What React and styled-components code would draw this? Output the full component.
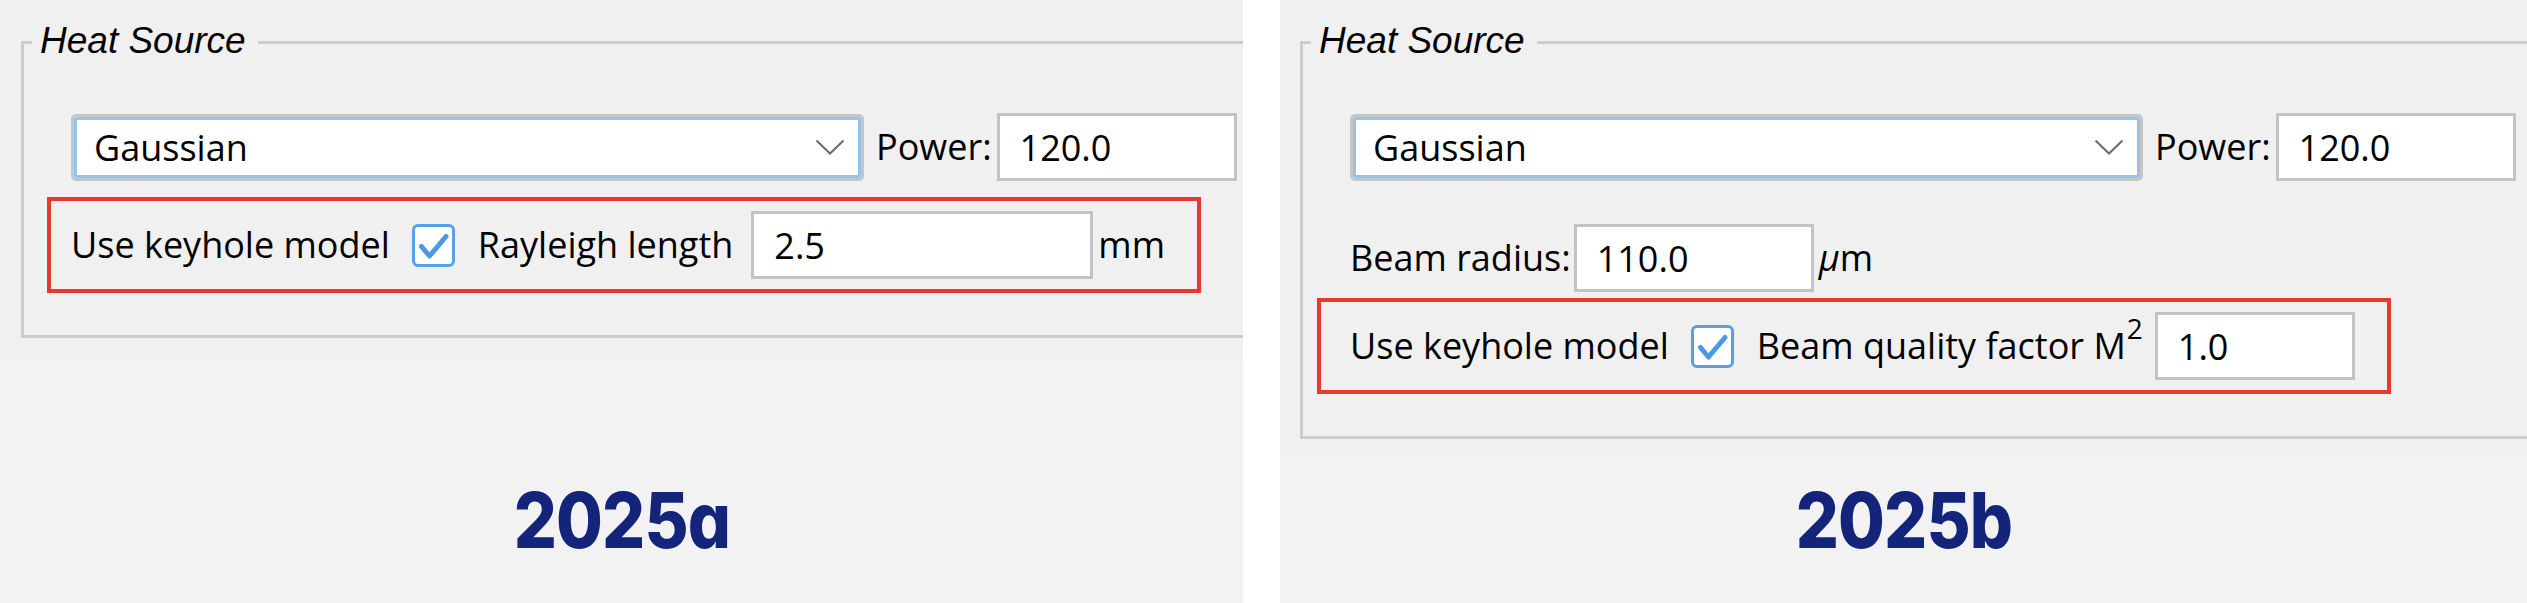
import React from "react";
import styled, { createGlobalStyle } from "styled-components";

const UI_FONT = `"Open Sans", "Noto Sans", "Liberation Sans", sans-serif`;
const DIALOG_BG = "#f0f0f0";

const GlobalStyle = createGlobalStyle`
  html, body {
    margin: 0;
    padding: 0;
    background: #ffffff;
  }
  body {
    width: 2527px;
    height: 603px;
    overflow: hidden;
  }
  * {
    box-sizing: border-box;
  }
`;

const Page = styled.main`
  display: flex;
  gap: 37px;
  width: 2527px;
  height: 603px;
`;

const Panel = styled.section`
  flex: 0 0 ${(p) => p.$width}px;
  display: flex;
  flex-direction: column;
  overflow: hidden;
  background: #f2f2f2;
`;

const Dialog = styled.div`
  flex: none;
  height: ${(p) => p.$height}px;
  padding: 41px 0 0 ${(p) => p.$inset}px;
  background: ${DIALOG_BG};
`;

/* Group box: a framed block whose caption sits over the top rule */
const Group = styled.div`
  position: relative;
  width: 1400px;
  padding: 69px 0 42px 47px;
  border: 3px solid #cdcdcd;
`;

const GroupTitle = styled.span`
  position: absolute;
  top: -22px;
  left: 8px;
  padding: 0 12px 0 8px;
  background: ${DIALOG_BG};
  font: italic 37px/37px "Liberation Sans", Arial, sans-serif;
  color: #000;
  white-space: nowrap;
`;

const Stack = styled.div`
  display: flex;
  flex-direction: column;
  align-items: flex-start;
`;

const Row = styled.div`
  display: flex;
  align-items: center;
  gap: 12px;
  margin-top: ${(p) => p.$mt || 0}px;
`;

const Highlight = styled.div`
  display: flex;
  align-items: center;
  gap: 12px;
  margin: ${(p) => p.$mt}px 0 0 -${(p) => p.$bleed}px;
  padding: 10px 32px 10px ${(p) => p.$bleed - 4}px;
  border: 4px solid #e63a2c;
`;

const Label = styled.span`
  font-family: ${UI_FONT};
  font-size: 36px;
  line-height: 1;
  color: #000;
  white-space: nowrap;
`;

const Unit = styled(Label)`
  margin-left: -7px;
`;

const Sup = styled.sup`
  font-size: 28px;
  line-height: 0;
  vertical-align: 20px;
  margin-left: 1px;
`;

const Select = styled.div`
  display: flex;
  align-items: center;
  justify-content: space-between;
  width: 793px;
  height: 67px;
  padding: 0 16px 0 20px;
  background: #ffffff;
  border: 3px solid #c6c6c6;
  border-radius: 5px;
  box-shadow: inset 0 0 0 3px #99c2e9;
  font-family: ${UI_FONT};
  font-size: 36px;
  color: #000;
`;

const Field = styled.input`
  width: ${(p) => p.$width}px;
  height: 68px;
  margin: 0 0 0 ${(p) => p.$ml || 0}px;
  padding: 0 0 0 20px;
  background: #ffffff;
  border: 3px solid #c3c3c3;
  border-radius: 0;
  outline: none;
  font-family: ${UI_FONT};
  font-size: 36px;
  color: #000;
`;

const Check = styled.span`
  display: inline-flex;
  flex: none;
  width: 43px;
  height: 43px;
  margin: 0 11px 0 10px;
  background: #ffffff;
  border: 3px solid #5a9fe6;
  border-radius: 6px;
`;

const Caption = styled.div`
  flex: 1;
  display: flex;
  align-items: flex-end;
  justify-content: center;
  padding-bottom: 44px;
`;

const Version = styled.h2`
  margin: 0;
  font-family: Inter, "Liberation Sans", sans-serif;
  font-weight: 800;
  font-size: 77px;
  line-height: 77px;
  letter-spacing: -1px;
  font-feature-settings: "cv11";
  color: #13247a;
  transform: scaleX(0.88);
`;

const Chevron = () => (
  <svg width="30" height="16" viewBox="0 0 30 16" aria-hidden="true">
    <polyline
      points="1.5,1.5 15,14.5 28.5,1.5"
      fill="none"
      stroke="#6b6b6b"
      strokeWidth="2"
    />
  </svg>
);

const CheckBox = () => (
  <Check role="checkbox" aria-checked="true">
    <svg width="37" height="37" viewBox="0 0 37 37" aria-hidden="true">
      <polyline
        points="6.5,19.5 14.5,29 31,9.5"
        fill="none"
        stroke="#4b98e5"
        strokeWidth="5"
        strokeLinecap="round"
        strokeLinejoin="round"
      />
    </svg>
  </Check>
);

const SourceRow = () => (
  <Row>
    <Select>
      <span>Gaussian</span>
      <Chevron />
    </Select>
    <Label>Power:</Label>
    <Field $width={240} $ml={-7} defaultValue="120.0" readOnly />
    <Label>W</Label>
  </Row>
);

export default function App() {
  return (
    <>
      <GlobalStyle />
      <Page>
        <Panel $width={1243}>
          <Dialog $height={360} $inset={21}>
            <Group>
              <GroupTitle>Heat Source</GroupTitle>
              <Stack>
                <SourceRow />
                <Highlight $mt={16} $bleed={24}>
                  <Label>Use keyhole model</Label>
                  <CheckBox />
                  <Label>Rayleigh length</Label>
                  <Field $width={342} $ml={6} defaultValue="2.5" readOnly />
                  <Unit>mm</Unit>
                </Highlight>
              </Stack>
            </Group>
          </Dialog>
          <Caption>
            <Version>2025a</Version>
          </Caption>
        </Panel>

        <Panel $width={1247}>
          <Dialog $height={454} $inset={20}>
            <Group>
              <GroupTitle>Heat Source</GroupTitle>
              <Stack>
                <SourceRow />
                <Row $mt={43}>
                  <Label>Beam radius:</Label>
                  <Field $width={240} $ml={-9} defaultValue="110.0" readOnly />
                  <Unit>
                    <i>μ</i>m
                  </Unit>
                </Row>
                <Highlight $mt={6} $bleed={33}>
                  <Label>Use keyhole model</Label>
                  <CheckBox />
                  <Label>
                    Beam quality factor M<Sup>2</Sup>
                  </Label>
                  <Field $width={200} defaultValue="1.0" readOnly />
                </Highlight>
              </Stack>
            </Group>
          </Dialog>
          <Caption>
            <Version>2025b</Version>
          </Caption>
        </Panel>
      </Page>
    </>
  );
}
